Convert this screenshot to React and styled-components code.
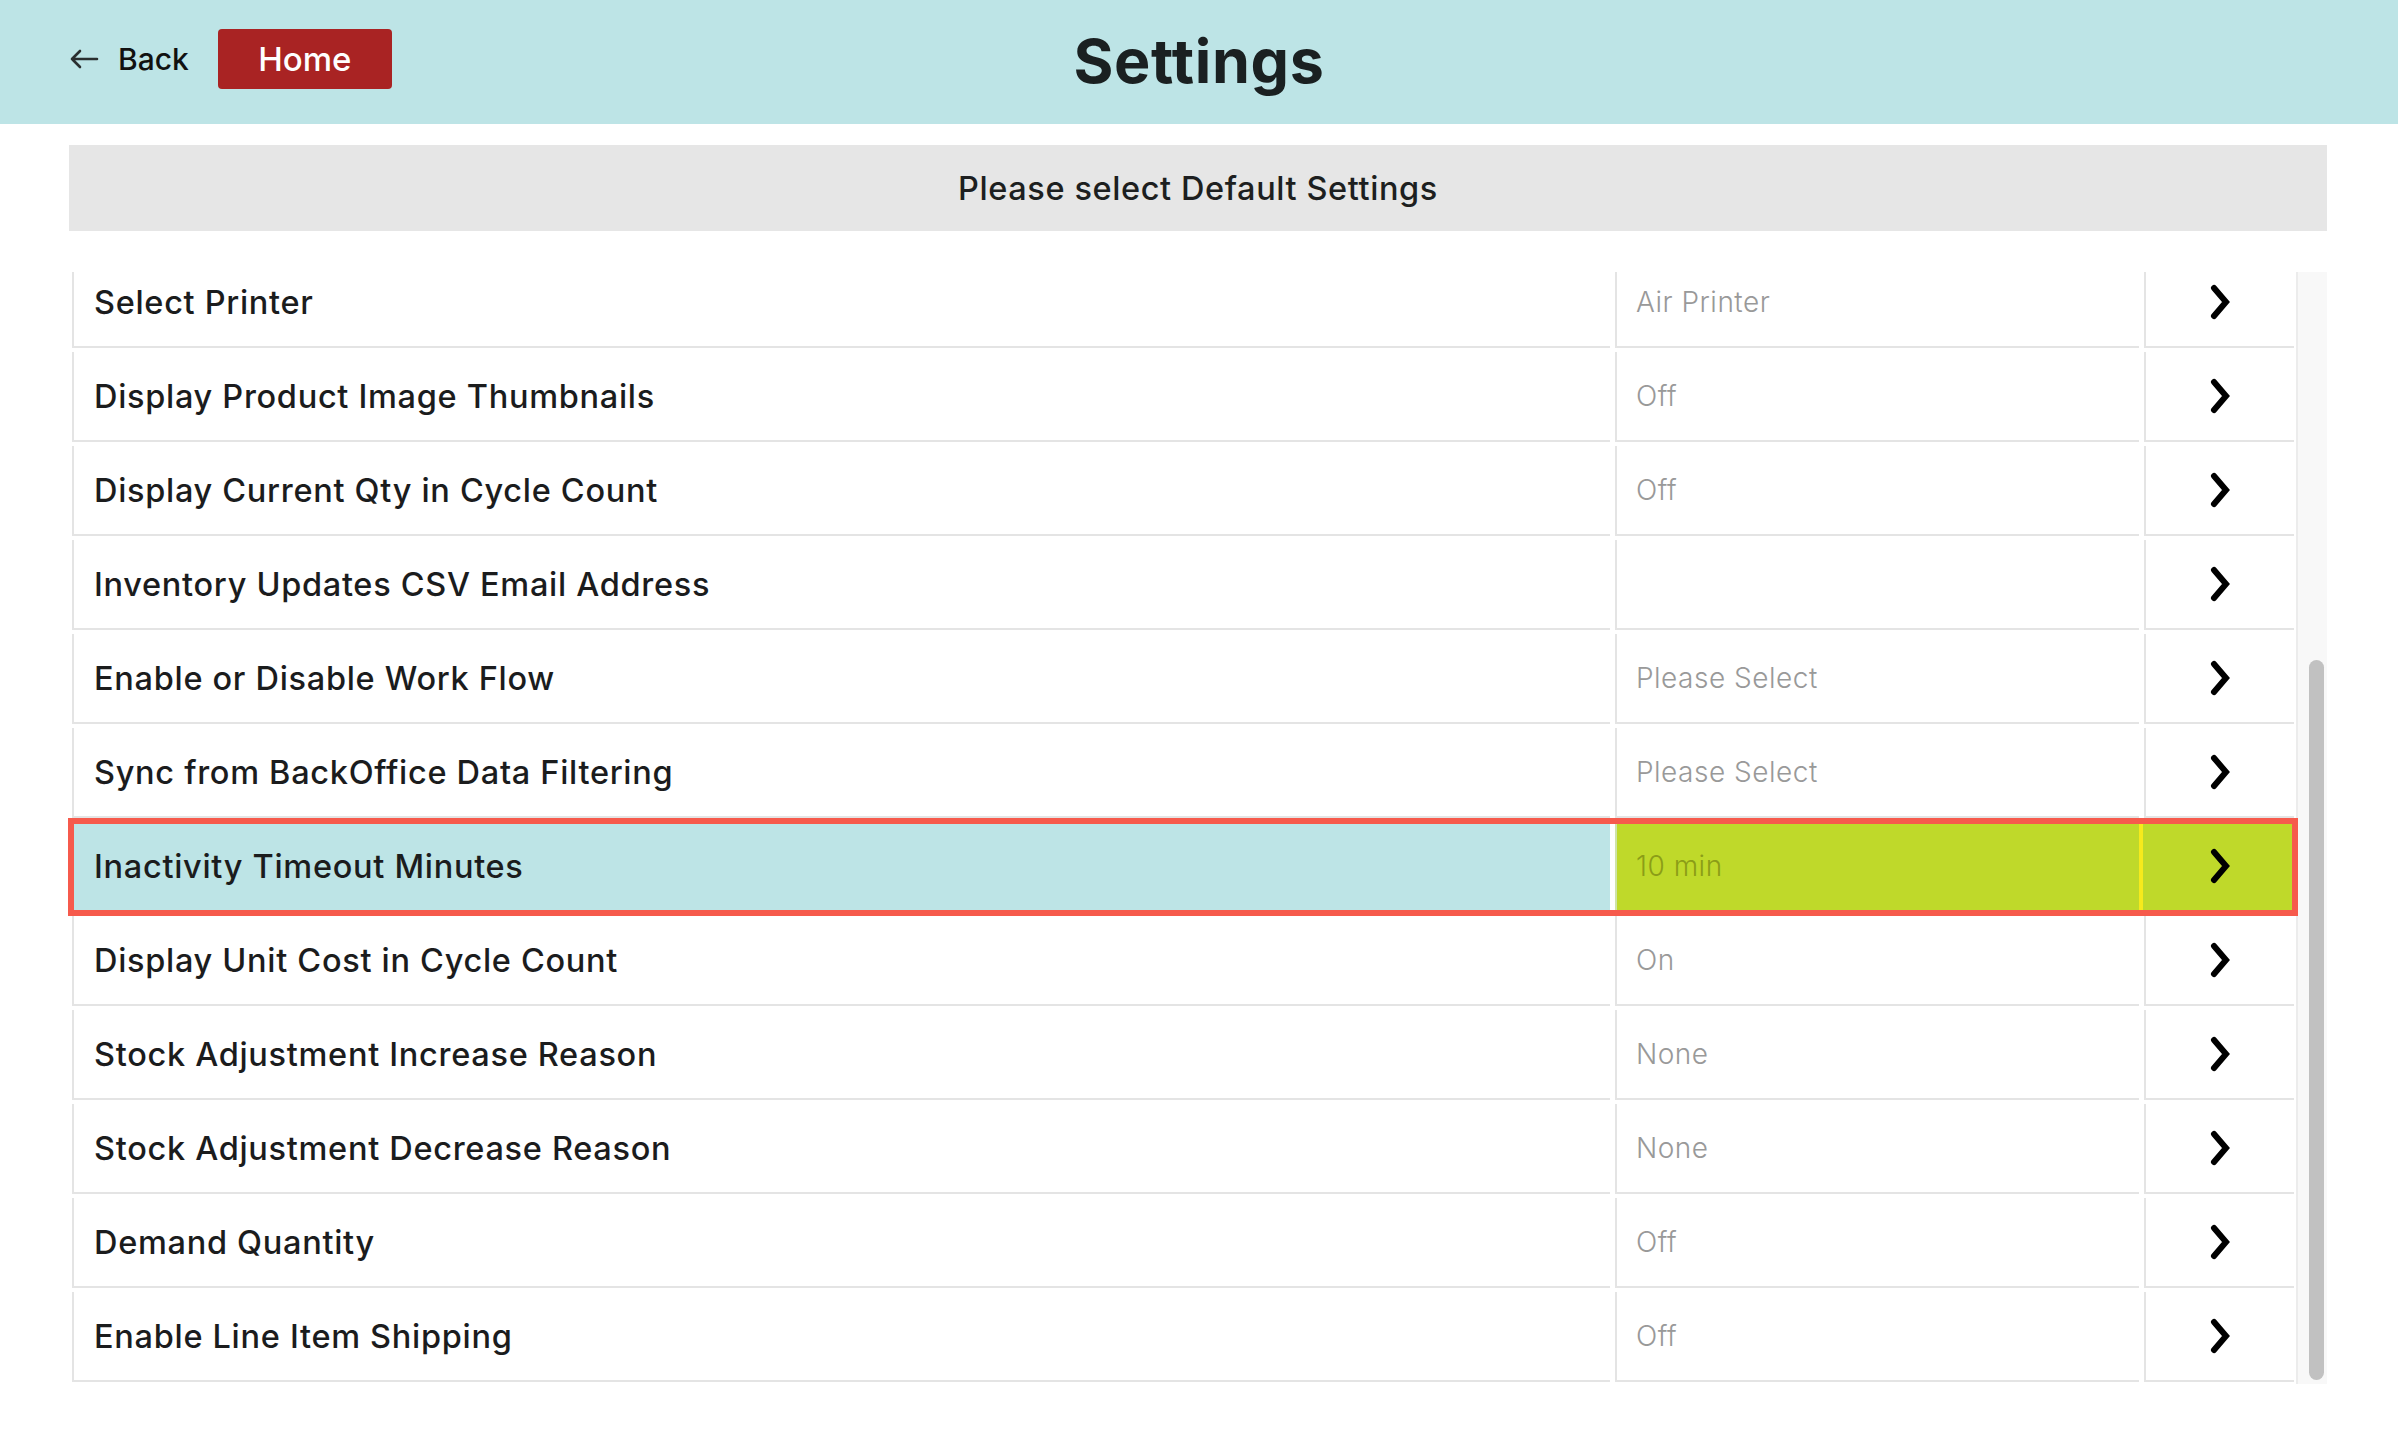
import React from 'react';
import styled, { createGlobalStyle } from 'styled-components';

const settings = [
  { label: 'Select Printer', value: 'Air Printer' },
  { label: 'Display Product Image Thumbnails', value: 'Off' },
  { label: 'Display Current Qty in Cycle Count', value: 'Off' },
  { label: 'Inventory Updates CSV Email Address', value: '' },
  { label: 'Enable or Disable Work Flow', value: 'Please Select' },
  { label: 'Sync from BackOffice Data Filtering', value: 'Please Select' },
  { label: 'Inactivity Timeout Minutes', value: '10 min', active: true },
  { label: 'Display Unit Cost in Cycle Count', value: 'On' },
  { label: 'Stock Adjustment Increase Reason', value: 'None' },
  { label: 'Stock Adjustment Decrease Reason', value: 'None' },
  { label: 'Demand Quantity', value: 'Off' },
  { label: 'Enable Line Item Shipping', value: 'Off' },
];

const BackArrow = () => (
  <svg width='30' height='22' viewBox='0 0 30 22'>
    <path
      d='M28 11H3M11 3L3 11L11 19'
      fill='none'
      stroke='#2a2f30'
      strokeWidth='2.6'
      strokeLinecap='round'
      strokeLinejoin='round'
    />
  </svg>
);

const Chevron = () => (
  <svg width='24' height='38' viewBox='0 0 24 38'>
    <polyline
      points='6,5 18,19 6,33'
      fill='none'
      stroke='#000'
      strokeWidth='6'
      strokeLinecap='round'
      strokeLinejoin='miter'
    />
  </svg>
);

const App = () => {
  return (
    <>
      <GlobalStyle />
      <Header>
        <HeaderLeft>
          <BackButton>
            <BackArrow />
            <span>Back</span>
          </BackButton>
          <HomeButton>Home</HomeButton>
        </HeaderLeft>
        <Title>Settings</Title>
        <div />
      </Header>
      <Content>
        <Banner>Please select Default Settings</Banner>
        <ListArea>
          <ListViewport>
            {settings.map(item => (
              <Row key={item.label} active={item.active}>
                <LabelCell active={item.active}>{item.label}</LabelCell>
                <ValueCell active={item.active}>{item.value}</ValueCell>
                <ArrowCell active={item.active}>
                  <Chevron />
                </ArrowCell>
              </Row>
            ))}
          </ListViewport>
          <ScrollTrack>
            <ScrollThumb />
          </ScrollTrack>
        </ListArea>
      </Content>
    </>
  );
};

const GlobalStyle = createGlobalStyle`
  html, body {
    margin: 0;
    padding: 0;
    background: #ffffff;
  }
  body {
    font-family: 'Inter', 'Noto Sans', sans-serif;
    color: #1b1d1e;
  }
`;

const Header = styled.header`
  height: 124px;
  background: #bde4e6;
  display: grid;
  grid-template-columns: 1fr auto 1fr;
  align-items: center;
  padding: 0 69px;
  box-sizing: border-box;
`;

const HeaderLeft = styled.div`
  display: flex;
  align-items: center;
  gap: 29px;
  margin-top: -7px;
`;

const BackButton = styled.div`
  display: flex;
  align-items: center;
  gap: 19px;
  font-size: 30px;
  font-weight: 500;
  color: #111;
`;

const HomeButton = styled.div`
  width: 174px;
  height: 60px;
  border-radius: 4px;
  background: #a92323;
  color: #fff;
  font-size: 33px;
  font-weight: 500;
  display: flex;
  align-items: center;
  justify-content: center;
`;

const Title = styled.h1`
  margin: 0 0 2px;
  font-size: 61px;
  font-weight: 700;
  color: #1a2021;
  letter-spacing: 0.6px;
`;

const Content = styled.main`
  padding: 21px 71px 0 69px;
`;

const Banner = styled.div`
  height: 86px;
  background: #e6e6e6;
  display: flex;
  align-items: center;
  justify-content: center;
  font-size: 32.5px;
  font-weight: 500;
  color: #1d1f20;
  letter-spacing: 0.6px;
`;

const ListArea = styled.div`
  margin-top: 41px;
  height: 1112px;
  display: flex;
`;

const ListViewport = styled.div`
  flex: 1;
  display: flex;
  flex-direction: column;
  justify-content: flex-end;
  gap: 4px;
  overflow: hidden;
  padding: 6px 6px 2px 6px;
  margin: 0 -6px 0 -3px;
`;

const Row = styled.div`
  flex-shrink: 0;
  height: 90px;
  display: grid;
  grid-template-columns: 1fr 524px 150px;
  column-gap: 5px;
  outline: ${props => (props.active ? '6px solid #f65a4c' : 'none')};
  outline-offset: -2px;
  position: relative;
  z-index: ${props => (props.active ? 1 : 0)};
`;

const Cell = styled.div`
  box-sizing: border-box;
  display: flex;
  align-items: center;
  border-left: 2px solid #e4e4e4;
  border-bottom: 2px solid #e4e4e4;
`;

const LabelCell = styled(Cell)`
  padding-left: 20px;
  font-size: 32.5px;
  font-weight: 500;
  color: #1b1c1d;
  letter-spacing: 0.7px;
  background: ${props => (props.active ? '#bde4e6' : '#fff')};
`;

const ValueCell = styled(Cell)`
  padding-left: 19px;
  font-size: 28px;
  font-weight: 300;
  letter-spacing: 0.5px;
  color: ${props => (props.active ? '#8c9d17' : '#999999')};
  background: ${props => (props.active ? '#bfd92a' : '#fff')};
  border-bottom-color: ${props => (props.active ? '#f7ea1c' : '#e4e4e4')};
  border-left-color: ${props => (props.active ? '#cfe3a8' : '#e4e4e4')};
`;

const ArrowCell = styled(Cell)`
  justify-content: center;
  background: ${props => (props.active ? '#bfd92a' : '#fff')};
  border-bottom-color: ${props => (props.active ? '#f7ea1c' : '#e4e4e4')};
  border-left-color: ${props => (props.active ? '#f7ea1c' : '#e4e4e4')};
  margin-left: ${props => (props.active ? '-5px' : '0')};
  border-left-width: ${props => (props.active ? '4px' : '2px')};
  padding-left: ${props => (props.active ? '3px' : '0')};
`;

const ScrollTrack = styled.div`
  width: 31px;
  margin-left: 2px;
  box-sizing: border-box;
  background: #f8f8f8;
  border-left: 2px solid #ececec;
  display: flex;
  flex-direction: column;
  justify-content: flex-end;
  align-items: center;
  padding: 0 0 4px 8px;
`;

const ScrollThumb = styled.div`
  width: 15px;
  height: 65%;
  border-radius: 8px;
  background: #c1c1c1;
`;

export default App;
